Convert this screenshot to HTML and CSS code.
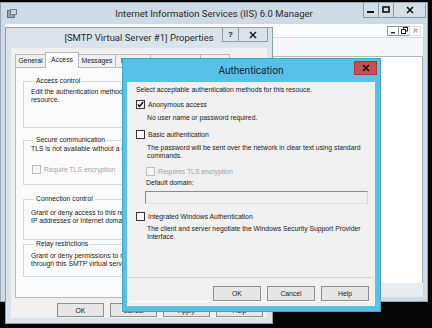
FILE: index.html
```html
<!DOCTYPE html>
<html lang="en">
<head>
    <meta charset="UTF-8">
    <title>IIS 6.0 Manager - Authentication</title>
    <link rel="stylesheet" href="styles.css">
</head>
<body>

<!-- Main IIS window -->
<div class="iis">
    <div class="iis-title">
        <svg class="app-icon" width="10" height="10" viewBox="0 0 10 10">
            <rect x="0.5" y="1.5" width="7" height="7" fill="#8fa3b4" stroke="#5b6f80"/>
            <rect x="3.5" y="0.5" width="6" height="5" fill="#c9d6e0" stroke="#6d8192"/>
        </svg>
        <span class="caption">Internet Information Services (IIS) 6.0 Manager</span>
        <div class="caption-buttons">
            <span class="cbtn"><svg width="8" height="8" viewBox="0 0 8 8"><rect x="0" y="5" width="7" height="2" fill="#111"/></svg></span>
            <span class="cbtn"><svg width="8" height="8" viewBox="0 0 8 8"><rect x="1" y="1" width="6" height="5" fill="none" stroke="#111" stroke-width="1.6"/></svg></span>
            <span class="cbtn cbtn-close"><svg width="8" height="8" viewBox="0 0 8 8"><path d="M1 1L7 7M7 1L1 7" stroke="#111" stroke-width="1.6"/></svg></span>
        </div>
    </div>
    <div class="iis-menu">
        <span>File</span><span>Action</span><span>View</span><span>Window</span><span>Help</span>
        <div class="mdi-buttons">
            <span class="mdi"><svg width="7" height="7" viewBox="0 0 7 7"><rect x="1" y="5" width="4" height="1.4" fill="#222"/></svg></span>
            <span class="mdi"><svg width="7" height="7" viewBox="0 0 7 7"><rect x="2.5" y="0.5" width="4" height="3.5" fill="none" stroke="#222"/><rect x="0.5" y="2.5" width="4" height="4" fill="#fff" stroke="#222"/></svg></span>
            <span class="mdi mdi-off"><svg width="7" height="7" viewBox="0 0 7 7"><path d="M1.5 1.5L5.5 5.5M5.5 1.5L1.5 5.5" stroke="#b0b0b0" stroke-width="1.2"/></svg></span>
        </div>
    </div>
    <div class="iis-toolbar"></div>
    <div class="iis-pane"></div>
    <div class="iis-status"></div>
</div>

<!-- SMTP properties dialog (inactive) -->
<div class="smtp">
    <div class="smtp-title">
        <span></span>
        <span class="caption">[SMTP Virtual Server #1] Properties</span>
        <div class="smtp-buttons">
            <span class="sbtn help">?</span>
            <span class="sbtn close"><svg width="8" height="8" viewBox="0 0 8 8"><path d="M1 1L7 7M7 1L1 7" stroke="#222" stroke-width="1.5"/></svg></span>
        </div>
    </div>
    <div class="smtp-client">
        <div class="tabs">
            <span class="tab t-general">General</span>
            <span class="tab tab-active t-access">Access</span>
            <span class="tab t-messages">Messages</span>
            <span class="tab t-delivery">Delivery</span>
            <span class="tab t-ldap">LDAP Routing</span>
            <span class="tab t-security">Security</span>
        </div>
        <div class="tab-panel">
            <fieldset class="group g-access">
                <legend>Access control</legend>
                <p>Edit the authentication methods for this<br>resource.</p>
            </fieldset>
            <fieldset class="group g-secure">
                <legend>Secure communication</legend>
                <p>TLS is not available without a certificate.</p>
                <div class="check check-off small-indent"><span class="cb"></span>Require TLS encryption</div>
            </fieldset>
            <fieldset class="group g-connection">
                <legend>Connection control</legend>
                <p>Grant or deny access to this resource using<br>IP addresses or Internet domain names.</p>
            </fieldset>
            <fieldset class="group g-relay">
                <legend>Relay restrictions</legend>
                <p>Grant or deny permissions to relay e-mail<br>through this SMTP virtual server.</p>
            </fieldset>
        </div>
        <div class="dialog-buttons smtp-footer">
            <button>OK</button>
            <button>Cancel</button>
            <button>Apply</button>
            <button>Help</button>
        </div>
    </div>
</div>

<!-- Authentication dialog (active) -->
<div class="auth">
    <div class="auth-title">
        <span></span>
        <span class="caption">Authentication</span>
        <span class="auth-close"><svg width="8" height="8" viewBox="0 0 8 8"><path d="M1 1L7 7M7 1L1 7" stroke="#111" stroke-width="1.6"/></svg></span>
    </div>
    <div class="auth-client">
        <p class="intro">Select acceptable authentication methods for this resouce.</p>

        <div class="check row-anon">
            <span class="cb"><svg width="7" height="7" viewBox="0 0 7 7"><path d="M0.8 3.4L2.6 5.3L6.2 1" fill="none" stroke="#111" stroke-width="1.5"/></svg></span>Anonymous access
        </div>
        <p class="note note-anon">No user name or password required.</p>

        <div class="check row-basic"><span class="cb"></span>Basic authentication</div>
        <p class="note note-basic">The password will be sent over the network in clear text using standard<br>commands.</p>
        <div class="check check-off row-tls"><span class="cb"></span>Requires TLS encryption</div>
        <p class="note domain-label">Default domain:</p>
        <div class="domain-input"></div>

        <div class="check row-windows"><span class="cb"></span>Integrated Windows Authentication</div>
        <p class="note note-windows">The client and server negotiate the Windows Security Support Provider<br>Interface.</p>

        <div class="auth-footer">
            <div class="dialog-buttons">
                <button>OK</button>
                <button>Cancel</button>
                <button>Help</button>
            </div>
        </div>
    </div>
</div>

</body>
</html>
```

FILE: styles.css
```css
* {
    margin: 0;
    padding: 0;
    box-sizing: border-box;
}

body {
    width: 432px;
    height: 328px;
    overflow: hidden;
    position: relative;
    background: #050505;
    font-family: "Liberation Sans", Arial, sans-serif;
    font-size: 6.8px;
    line-height: 8px;
    color: #1b1b1b;
}

.caption {
    font-family: Roboto, "Noto Sans", sans-serif;
    font-size: 9.5px;
    color: #2a2a2a;
    white-space: nowrap;
}

/* Main IIS window */
.iis {
    position: absolute;
    z-index: 1;
    left: 0;
    top: 2px;
    width: 428px;
    height: 300px;
    background: #cfdbe4;
    border: 1px solid #97a7b4;
    padding: 0 4px 4px 4px;
    display: flex;
    flex-direction: column;
}

.iis-title {
    height: 21px;
    display: grid;
    grid-template-columns: 1fr auto 1fr;
    align-items: center;
}

.app-icon {
    margin-left: 2px;
}

.caption-buttons {
    justify-self: end;
    align-self: start;
    display: flex;
    margin-right: -3px;
}

.cbtn {
    width: 16px;
    height: 15px;
    border: 1px solid #8d9ba6;
    border-top: none;
    margin-left: -1px;
    display: flex;
    align-items: center;
    justify-content: center;
    background: #d3dee6;
}

.cbtn-close {
    width: 33px;
}

.iis-menu {
    height: 14px;
    background: #fbfcfd;
    border-bottom: 1px solid #d2d8dd;
    display: flex;
    align-items: center;
    gap: 10px;
    padding-left: 8px;
    color: #333;
}

.mdi-buttons {
    margin-left: auto;
    margin-right: 2px;
    display: flex;
}

.mdi {
    width: 12px;
    height: 10px;
    background: #fff;
    border: 1px solid #9a9a9a;
    margin-left: -1px;
    display: flex;
    align-items: center;
    justify-content: center;
}

.mdi-off {
    border-color: #dcdcdc;
}

.iis-toolbar {
    height: 18px;
    background: #f6f7f8;
}

.iis-pane {
    flex: 1;
    background: #fff;
    border-top: 1px solid #b4b9bd;
    border-right: 1px solid #a9aeb3;
}

.iis-status {
    height: 14px;
    background: #e9ecee;
}

/* SMTP properties dialog */
.smtp {
    position: absolute;
    z-index: 2;
    left: 5px;
    top: 27px;
    width: 268px;
    height: 297px;
    background: #d9e3ea;
    border: 1px solid #8e9eab;
    padding: 0 5px 5px 5px;
    display: flex;
    flex-direction: column;
}

.smtp-title {
    height: 20px;
    display: grid;
    grid-template-columns: 1fr auto 1fr;
    align-items: center;
}

.smtp-buttons {
    justify-self: end;
    align-self: start;
    display: flex;
    margin-right: -1px;
}

.sbtn {
    height: 14px;
    width: 17px;
    border: 1px solid #8d9ba6;
    border-top: none;
    margin-left: -1px;
    display: flex;
    align-items: center;
    justify-content: center;
    font-family: "Liberation Sans", sans-serif;
    font-weight: bold;
    font-size: 8px;
    color: #222;
}

.sbtn.close {
    width: 30px;
}

.smtp-client {
    flex: 1;
    background: #f0f0f0;
    padding: 3px 1px 0 4px;
    display: flex;
    flex-direction: column;
}

.tabs {
    height: 16px;
    display: flex;
    align-items: flex-end;
    position: relative;
    z-index: 1;
}

.tab {
    height: 13px;
    border: 1px solid #b9b9b9;
    border-bottom: none;
    margin-right: -1px;
    background: #f0f0f0;
    display: flex;
    align-items: center;
    justify-content: center;
    white-space: nowrap;
    overflow: hidden;
    color: #222;
}

.tab-active {
    height: 16px;
    background: #fbfbfb;
    margin-bottom: -1px;
    padding-bottom: 2px;
}

.t-general { width: 31px; }
.t-access { width: 34px; }
.t-messages { width: 38px; }
.t-delivery { width: 36px; }
.t-ldap { width: 51px; }
.t-security { width: 30px; }

.tab-panel {
    height: 231px;
    background: #fbfbfb;
    border: 1px solid #b9b9b9;
    padding: 0 6px 0 7px;
}

.group {
    border: 1px solid #d5dadf;
    padding: 0 7px;
}

.group legend {
    padding: 0 2px;
    margin-left: 3px;
    color: #222;
}

.g-access {
    margin-top: 9px;
    padding-top: 3px;
    padding-bottom: 23px;
}

.g-secure {
    margin-top: 8px;
    padding-top: 1px;
    padding-bottom: 10px;
}

.g-connection {
    margin-top: 10px;
    padding-top: 6px;
    padding-bottom: 14px;
}

.g-relay {
    margin-top: 0;
    padding-top: 4px;
    padding-bottom: 8px;
}

.small-indent {
    margin-top: 12px;
    margin-left: 1px;
}

.dialog-buttons {
    display: flex;
    justify-content: flex-end;
    gap: 6px;
}

.dialog-buttons button {
    width: 47px;
    height: 14px;
    font-family: "Liberation Sans", Arial, sans-serif;
    font-size: 6.8px;
    color: #1b1b1b;
    background: #e6e6e6;
    border: 1px solid #8f8f8f;
}

.smtp-footer {
    margin-top: 5px;
    padding-right: 3px;
}

/* checkboxes */
.check {
    display: flex;
    align-items: center;
    gap: 3px;
    height: 9px;
}

.cb {
    width: 9px;
    height: 9px;
    border: 1px solid #333;
    background: #fff;
    display: flex;
    align-items: center;
    justify-content: center;
}

.check-off {
    color: #a3a3a3;
}

.check-off .cb {
    border-color: #bdbdbd;
    background: #f4f4f4;
}

/* Authentication dialog */
.auth {
    position: absolute;
    z-index: 3;
    left: 122px;
    top: 58px;
    width: 259px;
    height: 254px;
    background: #58c1e6;
    border: 1px solid #3fa4c9;
    padding: 0 5px 5px 4px;
    display: flex;
    flex-direction: column;
}

.auth-title {
    height: 23px;
    display: grid;
    grid-template-columns: 1fr auto 1fr;
    align-items: center;
}

.auth-title .caption {
    color: #15223b;
    font-size: 10px;
}

.auth-close {
    justify-self: end;
    align-self: start;
    margin-top: 2px;
    margin-right: -2px;
    width: 23px;
    height: 14px;
    background: #c64f4f;
    border: 1px solid #a63a3a;
    display: flex;
    align-items: center;
    justify-content: center;
}

.auth-client {
    flex: 1;
    background: #f0f0f0;
    padding: 4px 7px 5px 9px;
    display: flex;
    flex-direction: column;
}

.note {
    margin-left: 11px;
}

.row-anon { margin-top: 6px; }
.note-anon { margin-top: 5px; }
.row-basic { margin-top: 8px; }
.note-basic { margin-top: 5px; }
.row-tls { margin-top: 7px; margin-left: 10px; }
.domain-label { margin-top: 3px; margin-left: 10px; }

.domain-input {
    margin-top: 4px;
    margin-left: 9px;
    height: 13px;
    background: #f0f0f0;
    border: 1px solid;
    border-color: #8c8c8c #d4d4d4 #e2e2e2 #8c8c8c;
}

.row-windows { margin-top: 8px; }
.note-windows { margin-top: 4px; }

.auth-footer {
    margin-top: auto;
    margin-left: -8px;
    margin-right: -4px;
    border-top: 1px solid #d0d0d0;
    box-shadow: 0 1px 0 #fff;
    padding: 8px 3px 0 0;
}

.auth-footer .dialog-buttons button {
    width: 48px;
    height: 15px;
}
```
